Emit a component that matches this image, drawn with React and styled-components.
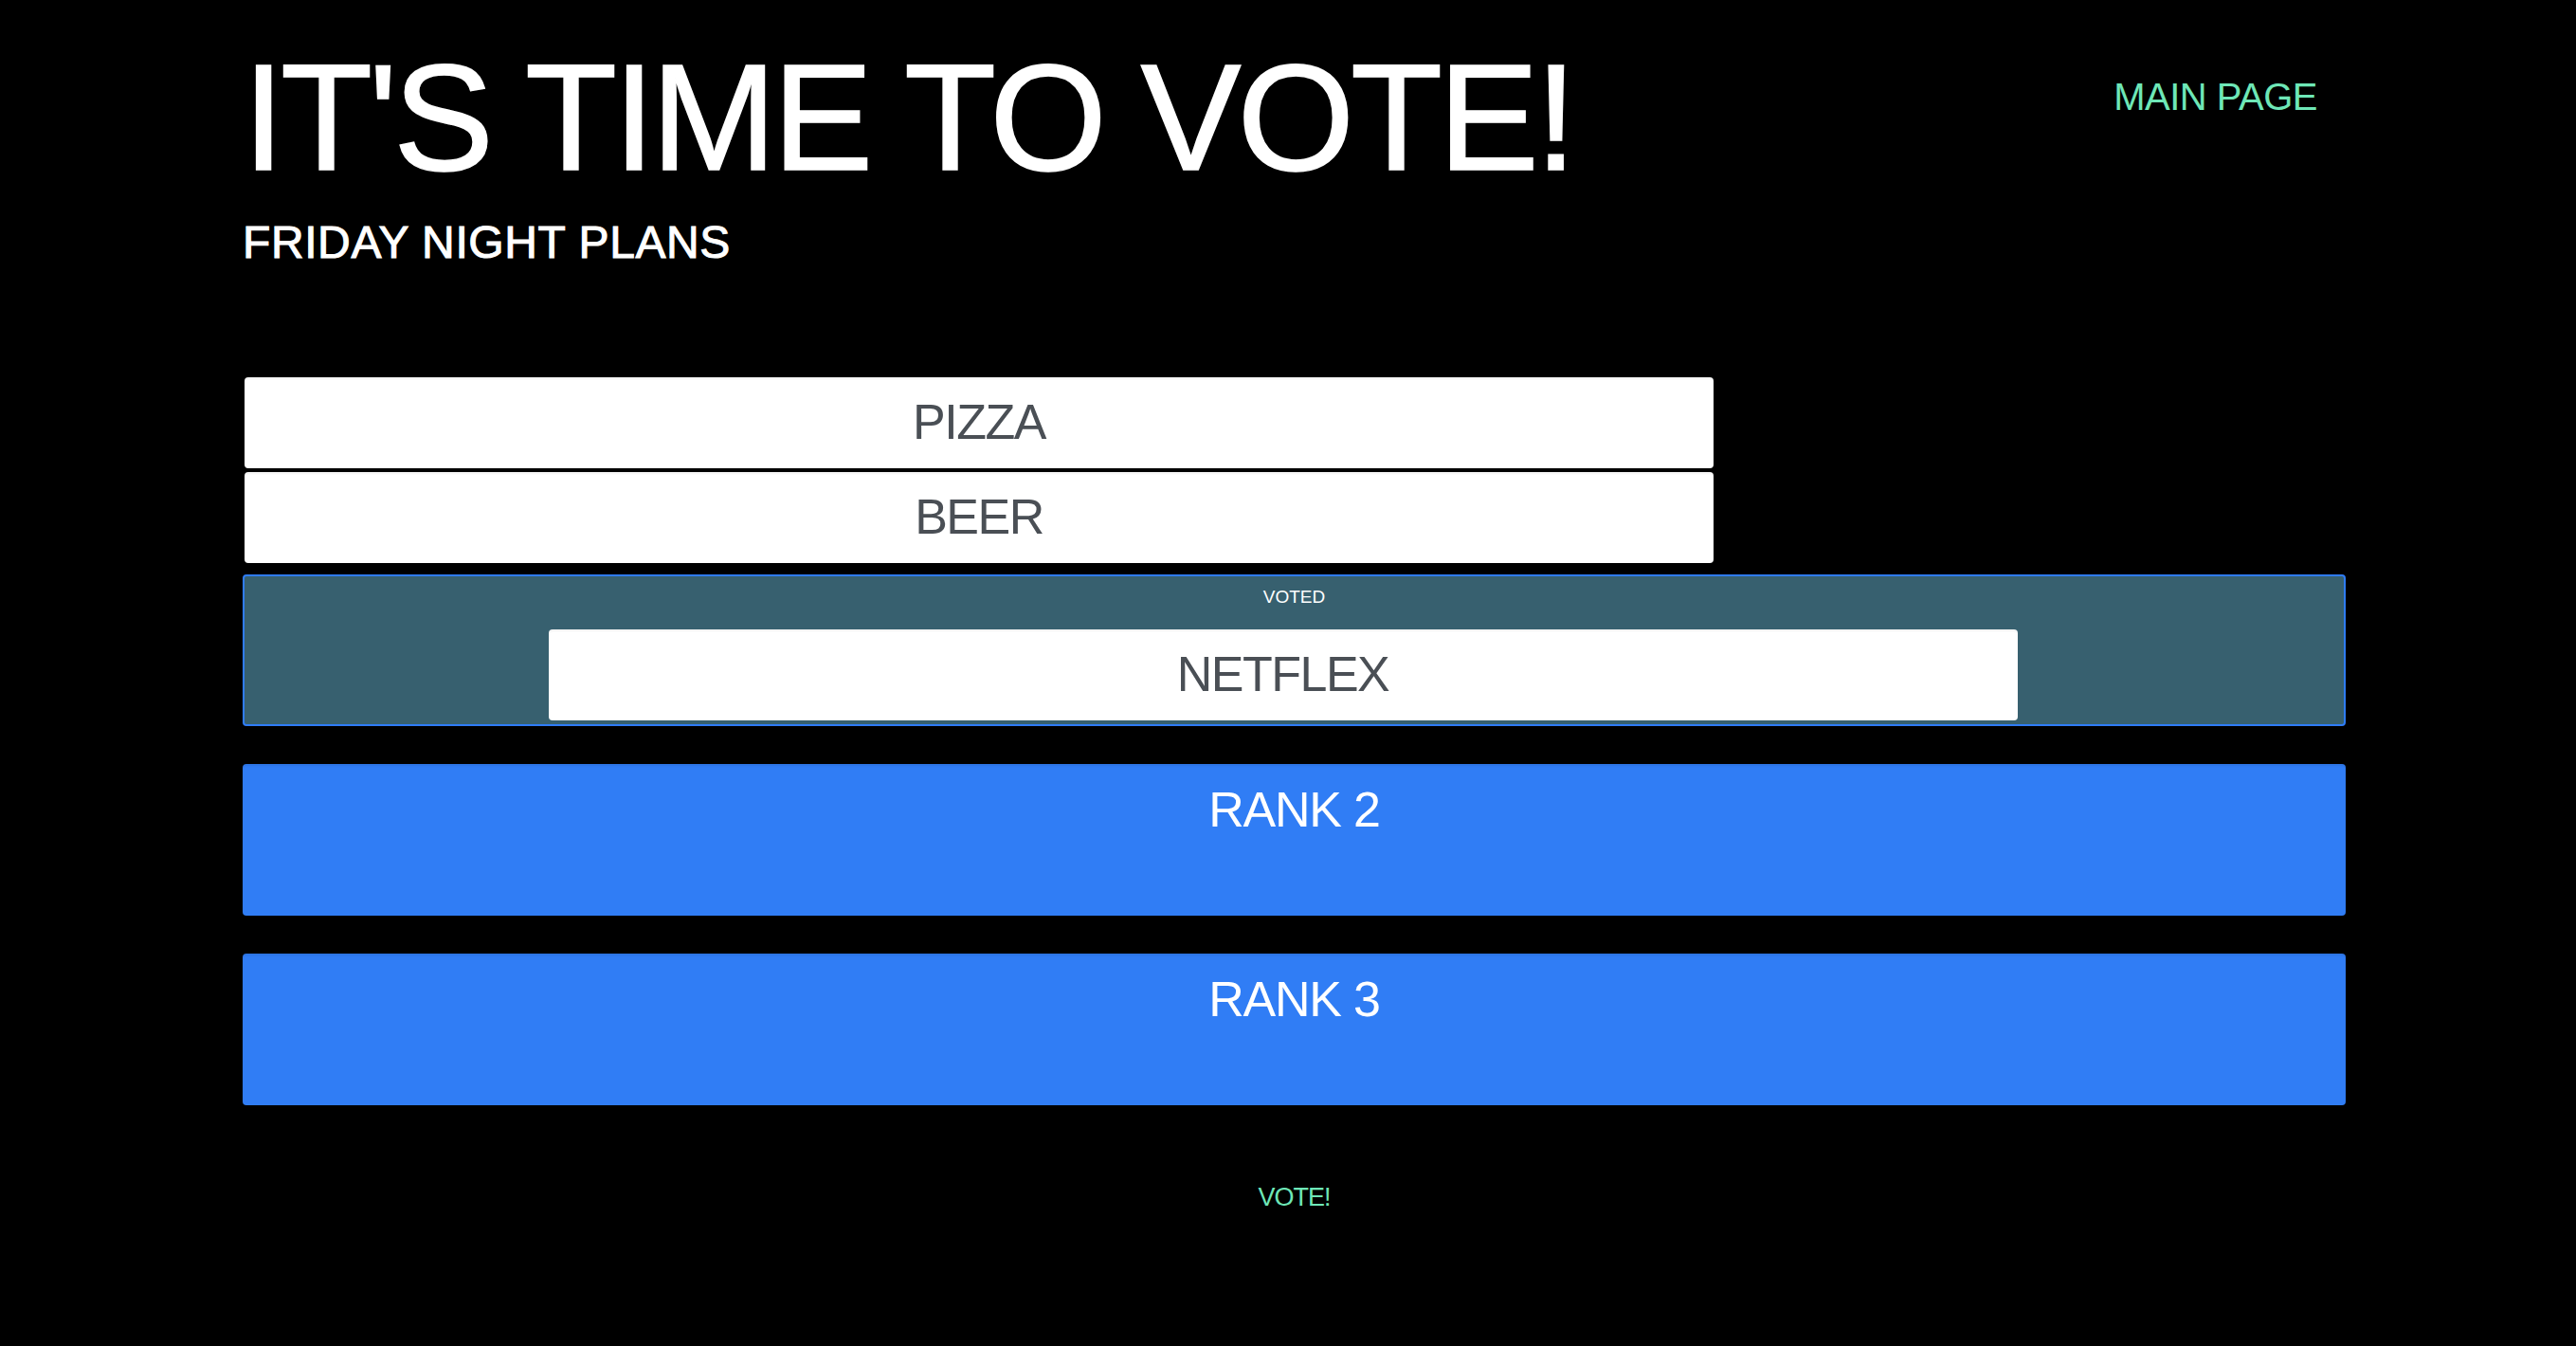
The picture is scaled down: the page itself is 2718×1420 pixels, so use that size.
import React from "react";
import styled, { createGlobalStyle } from "styled-components";

const GlobalStyle = createGlobalStyle`
  body {
    margin: 0;
    background: #000;
    font-family: "Liberation Sans", Arial, sans-serif;
  }
`;

const options = ["PIZZA", "BEER"];
const voted = ["NETFLEX"];
const ranks = ["RANK 2", "RANK 3"];

const App = () => {
  return (
    <Page>
      <GlobalStyle />
      <Header>
        <div>
          <Title>IT'S TIME TO VOTE!</Title>
          <Subtitle>FRIDAY NIGHT PLANS</Subtitle>
        </div>
        <MainLink href="#">MAIN PAGE</MainLink>
      </Header>

      <OptionList>
        {options.map((o) => (
          <Option key={o}>{o}</Option>
        ))}
      </OptionList>

      <VotedZone>
        <ZoneLabel>VOTED</ZoneLabel>
        <ZoneItems>
          {voted.map((o) => (
            <Option key={o}>{o}</Option>
          ))}
        </ZoneItems>
      </VotedZone>

      {ranks.map((r) => (
        <RankZone key={r}>{r}</RankZone>
      ))}

      <VoteButton type="button">VOTE!</VoteButton>
    </Page>
  );
};

const Page = styled.div`
  width: 2219px;
  padding-left: 256px;
  padding-bottom: 100px;
  color: #fff;
`;

const Header = styled.header`
  display: flex;
  justify-content: space-between;
  align-items: flex-start;
`;

const Title = styled.h1`
  margin: 45px 0 0;
  font-size: 159px;
  line-height: 1;
  font-weight: 400;
  letter-spacing: -4.2px;
  -webkit-text-stroke: 1.5px #fff;
  white-space: nowrap;
`;

const Subtitle = styled.h2`
  margin: 28px 0 0;
  font-size: 48px;
  line-height: 1;
  font-weight: 400;
  letter-spacing: 0.6px;
  -webkit-text-stroke: 1px #fff;
`;

const MainLink = styled.a`
  margin: 82px 30px 0 0;
  font-size: 40px;
  line-height: 1;
  letter-spacing: -0.5px;
  color: #6ee7b7;
  text-decoration: none;
`;

const OptionList = styled.div`
  margin-top: 116px;
  border: 2px solid transparent;
  display: flex;
  flex-direction: column;
  gap: 4px;
`;

const Option = styled.div`
  width: 1550px;
  height: 96px;
  box-sizing: border-box;
  padding-bottom: 3px;
  display: flex;
  align-items: center;
  justify-content: center;
  background: #fff;
  border-radius: 4px;
  box-shadow: inset 0 2px 2px rgba(0, 0, 0, 0.05);
  color: #4a4f55;
  font-size: 52px;
  line-height: 1;
  letter-spacing: -1.5px;
`;

const VotedZone = styled.div`
  margin-top: 10px;
  height: 160px;
  box-sizing: border-box;
  border: 2px solid #2f7cf6;
  border-radius: 4px;
  background: #37606f;
  padding: 12px 0 4px;
  display: flex;
  flex-direction: column;
  align-items: center;
`;

const ZoneLabel = styled.div`
  font-size: 19px;
  line-height: 1;
  color: #fff;
  margin-bottom: 25px;
`;

const ZoneItems = styled.div`
  display: flex;
  justify-content: center;
  padding-right: 24px;
`;

const RankZone = styled.div`
  margin-top: 40px;
  height: 160px;
  box-sizing: border-box;
  padding-top: 22px;
  border-radius: 4px;
  background: #307df5;
  box-shadow: inset 0 2px 2px rgba(0, 0, 0, 0.08);
  text-align: center;
  font-size: 52px;
  line-height: 1;
  letter-spacing: -1.2px;
  color: #fff;
`;

const VoteButton = styled.button`
  display: block;
  margin: 84px auto 0;
  padding: 0;
  border: none;
  background: none;
  font-family: "Liberation Sans", Arial, sans-serif;
  font-size: 27px;
  line-height: 1;
  letter-spacing: -1px;
  color: #6ee7b7;
  cursor: pointer;
`;

export default App;
